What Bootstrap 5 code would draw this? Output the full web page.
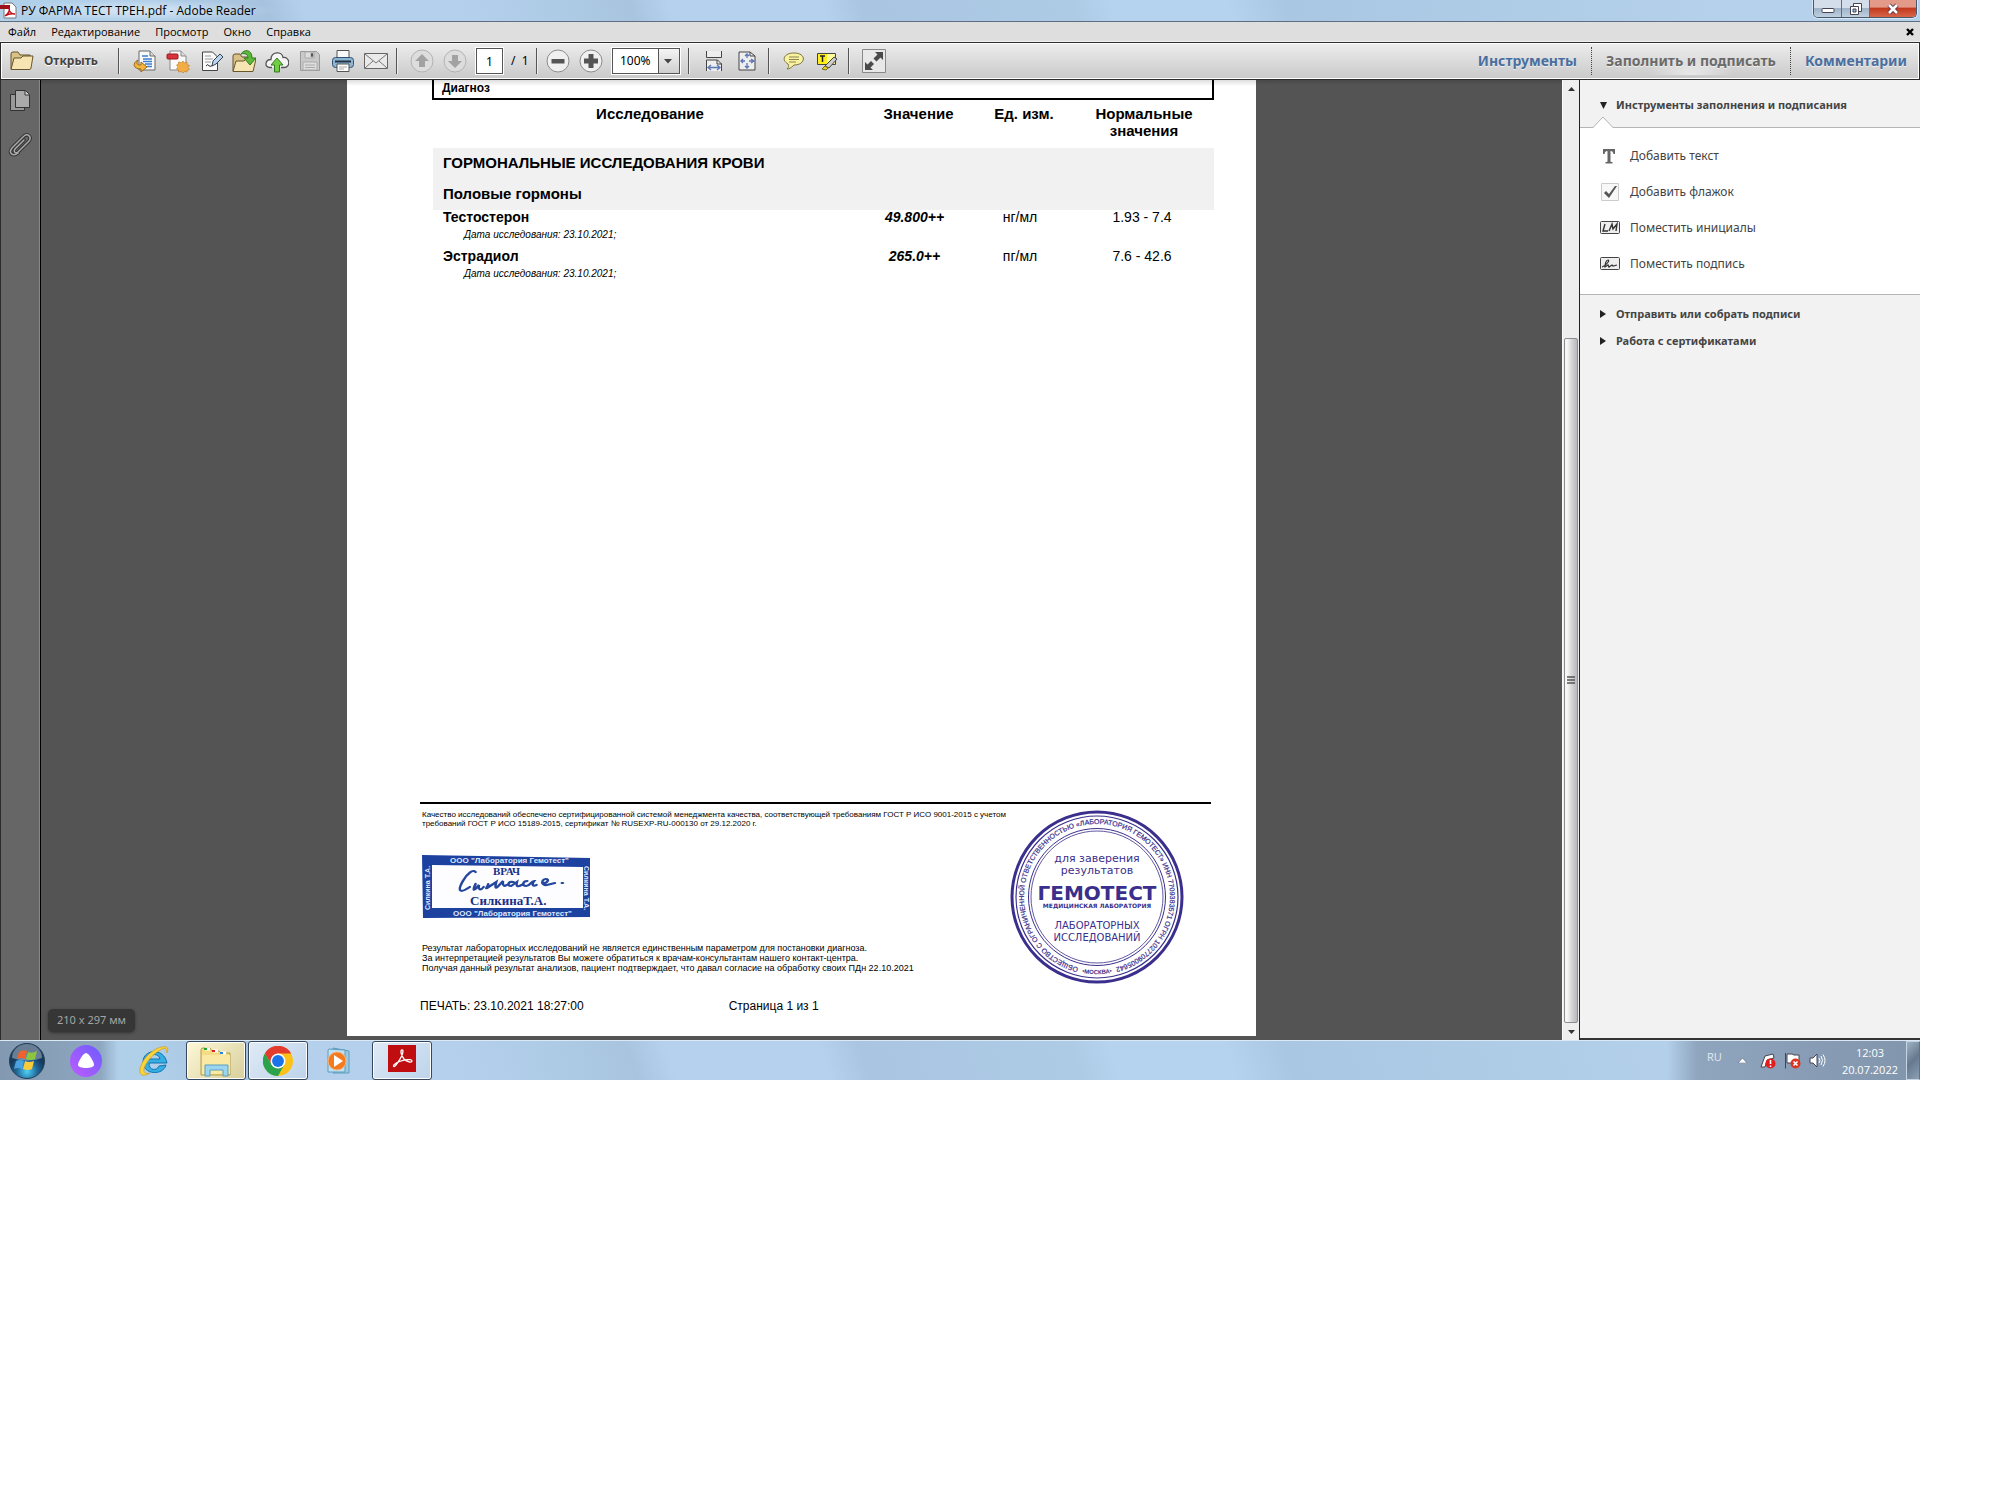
<!DOCTYPE html>
<html lang="ru">
<head>
<meta charset="utf-8">
<meta name="viewport" content="width=device-width, initial-scale=1">
<title>РУ ФАРМА ТЕСТ ТРЕН.pdf - Adobe Reader</title>
<link href="https://cdn.jsdelivr.net/npm/bootstrap@5.3.0/dist/css/bootstrap.min.css" rel="stylesheet">
<style>
body{background:#fff;font-family:"Noto Sans","Open Sans",sans-serif;font-size:12px;line-height:16px;color:#000}
button{border:0;background:none;padding:0;color:inherit;font:inherit}
svg{display:block;flex:none}
.desktop{max-width:1920px}
.glass{background-color:#b4d0eb;background-image:linear-gradient(72deg,#b0cfe9 0 8%,#a6c2de 14%,#b4d0ec 16% 24%,#adcae5 30%,#a8c4df 33%,#b5d1ee 35% 43%,#a9c5e1 45%,#aecbe6 56%,#b5d2ee 58% 64%,#a9c6e2 67%,#b0cde8 80%,#b5d1ec 90%)}
/* title bar */
.titlebar{height:22px;border-bottom:1px solid #5d6e80;font-family:"Open Sans",sans-serif}
.titleglow{background:radial-gradient(closest-side,rgba(255,255,255,.5),rgba(255,255,255,0));padding:1px 24px 0 0}
.winctl{height:18px;border:1px solid #48586a;border-top:0;border-radius:0 0 5px 5px;overflow:hidden;margin-right:3px;box-shadow:0 0 0 1px #d9e8f6}
.winctl button{width:28px;background:linear-gradient(#d3deea 45%,#a0b4c9 50%,#bfd0e0);border-right:1px solid #5d6e80;display:grid;place-items:center}
.winctl .shut{width:46px;border:0;background:linear-gradient(#e39a89 40%,#c23b1e 50%,#d8654b)}
.menubar{height:20px;background:#dedede;border-bottom:1px solid #f2f2f2;font-family:"Open Sans",sans-serif;font-size:11px}
.menubar a{color:#000;text-decoration:none}
.menulist{gap:15px}
/* toolbar */
.tools{height:38px;border:1px solid #2b2b2b;box-shadow:inset 0 0 0 1px #fff;background:linear-gradient(#ededed,#c9c9c9);color:#444}
.tools .slot{width:33px;height:30px;display:grid;place-items:center}
.vsep{width:2px;height:26px;border-left:1px solid #555;border-right:1px solid #eee;flex:none}
.openbtn{font-weight:700;width:109px;padding-left:9px;gap:10px;text-shadow:0 1px 0 #fff}
.openbtn span{font-size:12px}
.pagebox{width:27px;height:26px;border:1px solid #555;outline:1px solid #fff;text-align:center;background:#fff;padding:0;color:#000;font-size:12px}
.pagesum{width:25px}
.zoombox{height:26px;width:68px;border:1px solid #555;outline:1px solid #fff;background:linear-gradient(#f5f5f5,#cfcfcf)}
.zoombox select{appearance:none;border:0;border-radius:0;width:100%;height:24px;padding:0 0 0 7px;font-size:12px;color:#000;background:linear-gradient(#fff,#fff) left/45px 100% no-repeat,linear-gradient(#555,#555) 45px 0/1px 100% no-repeat}
.zoombox svg{position:absolute;right:7px;top:10px;pointer-events:none}
.modes a{font-size:14px;font-weight:700;line-height:28px;padding:0 14px;color:#4a6f9f;text-decoration:none;text-shadow:0 1px 0 #eee;border-left:1px dotted #444}
.modes a:first-child{border:0}
.modes a:last-child{padding-right:12px}
.modes a.current{color:#6a6a6a;background:radial-gradient(ellipse 42px 24px at 50% 100%,#e9e9e9,transparent)}
/* workspace */
.work{min-height:960px;background:#545454;border-left:1px solid #2b2b2b}
.rail{width:40px;background:#666;border-right:1px solid #000;box-shadow:inset -1px 0 #888;padding:9px 2px 0 0;gap:20px}
.viewer{background:linear-gradient(#484848,#545454 5px);padding-bottom:4px}
.sheet{width:909px;background:linear-gradient(#ddd,#fff 6px);font-family:"Liberation Sans",Arial,sans-serif;padding:0 42px 22px 72px}
.diag{border:2px solid #000;border-top:0;height:20px;margin-left:13px;font-size:12px;font-weight:700;padding:0 8px}
.results{margin-left:14px;width:781px;table-layout:fixed;line-height:17px;font-size:14px}
.results td,.results th{padding:0;text-align:center;vertical-align:top}
.results thead th{padding-top:5px;height:48px;font-size:15px}
.results thead th:last-child{padding-right:4px}
.results .grp th{background:#f1f1f1;text-align:left;padding:6px 0 6px 10px;font-size:15px;height:31px}
.results tbody .res>*{height:39px;line-height:14px;padding:0 8px 0 0}
.results tbody .res th{text-align:left;padding-left:10px}
.results .when{display:block;font-size:10px;font-weight:400;font-style:italic;line-height:12px;padding:5px 0 0 21px}
.foot{border-top:2px solid #000;margin:0 3px 0 1px}
.words{padding:6px 0 0 2px}
.fine{font-size:8px;line-height:9px}
.notes{font-size:9px;line-height:10px}
.printed{font-size:12px;gap:145px;padding:12px 1px 0}
.docmark{margin:24px 0 23px}
.seal{margin:4px 25px 0 0}
.tip{position:absolute;left:7px;bottom:8px;background:#363636;color:#a5a5a5;border-radius:5px;padding:3px 9px;height:23px;font-size:11px;box-shadow:0 1px 3px #333;white-space:nowrap}
.sbar{width:17px;background:#eee;border-left:1px solid #fafafa}
.sbar button{height:17px;display:grid;place-items:center}
.thumb{height:74%;border:1px solid #8c8c8c;border-radius:2px;margin:auto 1px 0;background:linear-gradient(90deg,#f6f6f6 20%,#d5d5d8 55%,#b8b9bd);display:grid;place-items:center}
.tray{width:341px;background:#f2f2f2;border-left:1px solid #222;border-bottom:2px solid #333;color:#444}
.tray h2{font-size:11px;line-height:16px;font-weight:700;margin:0}
.tray .head{height:48px;padding:17px 0 0 19px;border-bottom:1px solid #b5b5b5;position:relative}
.tray .notch{position:absolute;left:13px;bottom:-1px}
.tray .list{background:#fff;border-bottom:1px solid #b5b5b5;padding:10px 0 12px 20px}
.tray .list button{height:36px;gap:10px;width:100%;text-align:left}
.tray .sub{height:27px;padding-left:19px}
.subs{padding-top:5px}
/* taskbar */
.taskbar{height:40px;border-top:1px solid #dbe9f7}
.taskbar .dim{background:linear-gradient(90deg,#8399b1,#8ea6c0 85%,transparent)}
.taskgrp{gap:2px;padding-left:6px}
.assist{width:44px}
.task{width:60px;height:39px;display:grid;place-items:center}
.task.open{border:1px solid #35475a;border-radius:3px;box-shadow:inset 0 0 0 1px #fff;background:linear-gradient(135deg,#dfeaf6,#bdd3ea)}
.task.folder{background:linear-gradient(135deg,#fdf8d8,#d8cf9c)}
.status{background:linear-gradient(90deg,transparent,#8fa5be 12%,#8195ac);color:#fff;padding-left:40px;font-family:"Open Sans",sans-serif;font-size:11px}
.lang{color:#e3eaf1}
.clock{line-height:17px;padding-top:3px}
.peek{width:14px;border:1px solid #c5d4e3;border-right-color:#5f7387;background:linear-gradient(135deg,#a0b2c5,#66798e 50%,#8ba0b5)}
</style>
</head>
<body>
<div class="desktop d-flex flex-column">
  <header class="titlebar glass d-flex align-items-start">
    <div class="titleglow d-flex align-items-center gap-1">
      <svg width="17" height="20" viewBox="0 0 17 20"><path d="M4 2h8l4 4v11H4z" fill="#fff" stroke="#777"/><path d="M0 4h10v4H0z" fill="#a01018"/><path d="M5 15c4-3 5-6 4-8 0 3 2 6 6 6-4-1-7 0-10 2z" fill="none" stroke="#c0101c" stroke-width="1.5"/></svg>
      <span>РУ ФАРМА ТЕСТ ТРЕН.pdf - Adobe Reader</span>
    </div>
    <div class="winctl d-flex ms-auto">
      <button aria-label="Свернуть"><svg width="14" height="14"><rect x="1" y="6.500" width="12" height="4" rx="1" fill="#fff" stroke="#445"/></svg></button>
      <button aria-label="Восстановить"><svg width="14" height="14"><path d="M4.500 1.500h8v8h-8z" fill="#fff" stroke="#445"/><path d="M1.500 4.500h8v8h-8z" fill="#fff" stroke="#445"/><path d="M4 7h3v3H4z" fill="#9bd" stroke="#445"/></svg></button>
      <button class="shut" aria-label="Закрыть"><svg width="14" height="12"><path d="M3 2l8 8M11 2l-8 8" stroke="#534" stroke-width="4.500"/><path d="M3 2l8 8M11 2l-8 8" stroke="#fff" stroke-width="2.600"/></svg></button>
    </div>
  </header>
  <nav class="menubar d-flex align-items-center ps-2 pe-1">
    <div class="menulist d-flex"><a href="#">Файл</a><a href="#">Редактирование</a><a href="#">Просмотр</a><a href="#">Окно</a><a href="#">Справка</a></div>
    <button class="ms-auto" aria-label="Закрыть документ"><svg width="10" height="8"><path d="M1 1l6 6M7 1L1 7" stroke="#000" stroke-width="2.400"/></svg></button>
  </nav>

  <div class="tools d-flex align-items-center">
    <button class="openbtn d-flex align-items-center"><svg width="24" height="20" viewBox="0 0 24 20"><path d="M1 18V3q0-2 2-2h5l2 3h10v4" fill="#d9c188" stroke="#67552c"/><path d="M1 18.500L4 7h7l2-2h10l-2 12q0 1.500-2 1.500z" fill="#f6e5b2" stroke="#67552c"/></svg><span>Открыть</span></button>
    <span class="vsep ms-2 me-2"></span>
    <button class="slot" aria-label="Преобразовать"><svg width="24" height="24"><path d="M6 2h11l5 5v14H6z" fill="#fafafa" stroke="#666"/><path d="M17 2v5h5" fill="#ddd" stroke="#666"/><path d="M9 7h6M10 10h9M10 12.500h9M12 15h7M14 17.500h5" stroke="#3d7fd0" stroke-width="1.300"/><path d="M5 11c-6 3-5 9 3 9v3l6-5-6-5v3c-4 0-5-1-3-5z" fill="#f4b63c" stroke="#9a6718"/></svg></button>
    <button class="slot" aria-label="Создать PDF"><svg width="24" height="24"><path d="M4 2h11l5 5v14H4z" fill="#fafafa" stroke="#888"/><path d="M15 2v5h5" fill="#ddd" stroke="#888"/><rect x="1" y="5" width="11" height="5" rx="1" fill="#d8343c" stroke="#a0151d"/><path d="M17 12l1.500 2 2.500-1v2.500l2.500 1-1.500 2 1.500 2-2.500 1V23l-2.500-.500L17 24l-1.500-1.500-3 .500v-2l-2-1 1.500-2-1.500-2 2-1v-2l3 .500z" fill="#f2ae45" stroke="#b9792a" stroke-width=".6"/></svg></button>
    <button class="slot" aria-label="Редактировать"><svg width="24" height="24"><path d="M3.500 3h10l5 5v13.500h-15z" fill="#fafafa" stroke="#444"/><path d="M6 7h6M6 10h8M6 13h6" stroke="#999"/><path d="M7 17q2-3 3 0 2 1 4-1" fill="none" stroke="#333"/><path d="M13 17l1-5 7-7 3 3-7 7z" fill="#b9d4ec" stroke="#345"/></svg></button>
    <button class="slot" aria-label="Открыть из папки"><svg width="24" height="24"><path d="M1 22V7q0-2 2-2h5l2 3h9v5" fill="#d9c188" stroke="#67552c"/><path d="M1 22.500L4 12h8l2-2h10l-3 12.500z" fill="#f6e5b2" stroke="#67552c"/><path d="M9 5c3-5 11-5 11 4h4l-6 7-6-7h4c0-4-3-5-7-4z" fill="#5db83a" stroke="#2c7d18"/></svg></button>
    <button class="slot" aria-label="В облако"><svg width="24" height="24"><path d="M7 18.500H5c-6 0-5-8 1-8 0-8 11-9 12-2 7-1 8 10 1 10h-3" fill="#f5f5f5" stroke="#555" stroke-width="1.300"/><path d="M12 9l6 7h-3.500v7h-5v-7H6z" fill="#75cc45" stroke="#2f7d1c"/></svg></button>
    <button class="slot" aria-label="Сохранить"><svg width="22" height="22"><path d="M1.500 1.500h16l3 3v16h-19z" fill="#c9c9c9" stroke="#999"/><path d="M6 2h9v6H6zM4 12h14v8H4z" fill="#dedede" stroke="#aaa"/><path d="M12 3h2v4h-2zM6 15h10M6 17.500h10" stroke="#aaa"/></svg></button>
    <button class="slot" aria-label="Печать"><svg width="24" height="24"><path d="M6 1.500h12V10H6z" fill="#fafafa" stroke="#555"/><rect x="1.500" y="8.500" width="21" height="10" rx="3" fill="#8db4d3" stroke="#34536e"/><path d="M4 12.500h16" stroke="#234" stroke-width="2"/><path d="M6 15h12v7.500H6z" fill="#fff" stroke="#555"/><path d="M8 18h8M8 20h5" stroke="#aaa"/></svg></button>
    <button class="slot" aria-label="Почта"><svg width="26" height="20"><path d="M1.500 2.500h23v15h-23z" fill="#eaeaea" stroke="#666"/><path d="M2 3l11 9L24 3M2 17l8-7M24 17l-8-7" fill="none" stroke="#777"/></svg></button>
    <span class="vsep mx-1"></span>
    <button class="slot ms-1" aria-label="Предыдущая страница"><svg width="26" height="24"><circle cx="12" cy="12" r="11" fill="#ddd" stroke="#b3b3b3"/><path d="M12 5l7 7h-4v6H9v-6H5z" fill="#a2a2a2"/></svg></button>
    <button class="slot" aria-label="Следующая страница"><svg width="26" height="24"><circle cx="12" cy="12" r="11" fill="#ddd" stroke="#b3b3b3"/><path d="M12 19l7-7h-4V6H9v6H5z" fill="#a2a2a2"/></svg></button>
    <input class="pagebox ms-1" value="1" aria-label="Номер страницы"><span class="pagesum text-black ms-2">/ &nbsp;1</span>
    <span class="vsep me-1"></span>
    <button class="slot" aria-label="Уменьшить"><svg width="26" height="24"><circle cx="12" cy="12" r="11" fill="#f0f0f0" stroke="#8b8b8b"/><path d="M5.500 10h13v4.500h-13z" fill="#555"/></svg></button>
    <button class="slot" aria-label="Увеличить"><svg width="26" height="24"><circle cx="12" cy="12" r="11" fill="#f0f0f0" stroke="#8b8b8b"/><path d="M5 9.500h4.500V5h5v4.500H19v5h-4.500V19h-5v-4.500H5z" fill="#555"/></svg></button>
    <div class="zoombox position-relative ms-1"><select aria-label="Масштаб"><option>100%</option></select><svg width="8" height="5"><path d="M0 0h8L4 4.500z" fill="#444"/></svg></div>
    <span class="vsep ms-2 me-2"></span>
    <button class="slot" aria-label="По ширине"><svg width="22" height="22"><path d="M2.500 1v6.500h15V1M2.500 21v-11h11l4 4v7" fill="#eee" stroke="#444"/><path d="M13 10v4h5" fill="none" stroke="#444"/><path d="M4 17.500h12M7 15l-3 2.500L7 20M13 15l3 2.500-3 2.500" fill="none" stroke="#5b77b5" stroke-width="1.300"/></svg></button>
    <button class="slot me-1" aria-label="Страница целиком"><svg width="22" height="22"><path d="M2 2h11l5 4v14H2z" fill="#eee" stroke="#444"/><path d="M13 2v4h5" fill="none" stroke="#444"/><path d="M10 4v4M10 13v5M4 11h4M12 11h5M8 6l2-2 2 2M8 16l2 2 2-2M6 9l-2 2 2 2M14 9l3 2-3 2" fill="none" stroke="#5b77b5" stroke-width="1.300"/></svg></button>
    <span class="vsep me-1"></span>
    <button class="slot ms-1" aria-label="Комментарий"><svg width="24" height="20"><path d="M11 2c13 0 12 12 0 12-3 3-5 4-7 4 2-2 2-3 1-5C-2 9 1 2 11 2z" fill="#f9f3a0" stroke="#7c7345"/><path d="M6 6h10M6 8.500h10M6 11h7" stroke="#8b8457"/></svg></button>
    <button class="slot" aria-label="Выделить текст"><svg width="24" height="20"><path d="M1.500 2.500h18v11h-18z" fill="#fdfd9a" stroke="#444"/><path d="M2 3h9v10H2z" fill="#ffee1c"/><path d="M4 5h5M6.500 5v6" stroke="#222" stroke-width="1.500"/><path d="M9 15l9-9 3 2-8 9z" fill="#ccc" stroke="#444"/><path d="M6 18l3-3 3 2-2 2z" fill="#e6cf30" stroke="#776a10"/></svg></button>
    <span class="vsep mx-1"></span>
    <button class="slot ms-1" aria-label="Во весь экран"><svg width="26" height="24"><path d="M.5.500h23v23H.5z" fill="#e8e8e8" stroke="#888"/><path d="M13 3h8v8l-2.500-2.500-4 4-3-3 4-4zM11 21H3v-8l2.500 2.500 3.500-3.500 3 3-3.500 3.500z" fill="#4a4a4a"/></svg></button>
    <nav class="modes d-flex ms-auto"><a href="#">Инструменты</a><a href="#" class="current">Заполнить и подписать</a><a href="#">Комментарии</a></nav>
  </div>

  <main class="work d-flex">
    <div class="rail d-flex flex-column align-items-center flex-shrink-0">
      <button aria-label="Миниатюры"><svg width="24" height="24"><path d="M2.500 5.500h14v16h-14z" fill="#999" stroke="#333"/><path d="M7.500 1.500h10l4 4v13h-14z" fill="#aaa" stroke="#333"/><path d="M17 2v4h4" fill="#ddd" stroke="#333"/></svg></button>
      <button aria-label="Вложения"><svg width="24" height="24" fill="none" stroke-linecap="round"><path d="M16 7l-9 9c-2 3 1 5 3 3L21 8c3-4-1-8-5-5L4 15c-4 5 1 9 6 5" stroke="#333" stroke-width="3.500"/><path d="M16 7l-9 9c-2 3 1 5 3 3L21 8c3-4-1-8-5-5L4 15c-4 5 1 9 6 5" stroke="#aaa" stroke-width="1.500"/></svg></button>
    </div>
    <div class="viewer flex-grow-1 d-flex justify-content-center position-relative">
      <article class="sheet d-flex flex-column">
        <div class="diag">Диагноз</div>
        <table class="results">
          <colgroup><col style="width:434px"><col style="width:103px"><col style="width:108px"><col></colgroup>
          <thead><tr><th>Исследование</th><th>Значение</th><th>Ед. изм.</th><th>Нормальные<br>значения</th></tr></thead>
          <tbody>
            <tr class="grp"><th colspan="4">ГОРМОНАЛЬНЫЕ ИССЛЕДОВАНИЯ КРОВИ</th></tr>
            <tr class="grp"><th colspan="4">Половые гормоны</th></tr>
            <tr class="res"><th>Тестостерон<span class="when">Дата исследования: 23.10.2021;</span></th><td class="fw-bold fst-italic">49.800++</td><td>нг/мл</td><td>1.93 - 7.4</td></tr>
            <tr class="res"><th>Эстрадиол<span class="when">Дата исследования: 23.10.2021;</span></th><td class="fw-bold fst-italic">265.0++</td><td>пг/мл</td><td>7.6 - 42.6</td></tr>
          </tbody>
        </table>
        <footer class="mt-auto">
          <div class="foot d-flex justify-content-between">
            <div class="words">
              <p class="fine mb-0">Качество исследований обеспечено сертифицированной системой менеджмента качества, соответствующей требованиям ГОСТ Р ИСО 9001-2015 с учетом<br>требований ГОСТ Р ИСО 15189-2015, сертификат № RUSEXP-RU-000130 от 29.12.2020 г.</p>
              <svg class="docmark" width="172" height="68" viewBox="0 0 172 68" font-family="Liberation Serif, serif" font-weight="700">
                <path d="M0 3l168 3v59L1 66z" fill="#1c419f"/><path d="M10 13l151 2v41L10 56z" fill="#fdfdff"/>
                <g fill="#dfe8ff" font-family="Liberation Sans, sans-serif" font-size="8"><text x="28" y="11">ООО "Лаборатория Гемотест"</text><text x="31" y="64">ООО "Лаборатория Гемотест"</text><text transform="translate(8 58) rotate(-90)" font-size="7">Силкина Т.А.</text><text transform="translate(162 14) rotate(90)" font-size="7">Силкина Т.А.</text></g>
                <g fill="#1c2f86"><text x="71" y="23" font-size="11">ВРАЧ</text><text x="48" y="53" font-size="13">СилкинаТ.А.</text></g>
                <path transform="translate(-12 0) scale(1.15 1)" d="M57 20c-2-3-7 1-11 9-5 10-3 13 6 6m5-3c-3 7-2 8 3 1-1 6 2 5 4 2m4-3c0 2-3 5-1 4l8-6c-1 4-1 7 1 5l5-6c-1 4 1 6 3 4m6-3c-5-1-6 4-2 4l5-4c-1 5 1 5 4 3m5-4c-4 0-5 5-1 5s4-5 7-5c-2 3-2 6 2 4m5-2c4 1 7-4 3-4s-4 7 1 6l7-2m6 0h1" fill="none" stroke="#24479d" stroke-width="2.200" stroke-linecap="round"/>
              </svg>
              <p class="notes mb-0">Результат лабораторных исследований не является единственным параметром для постановки диагноза.<br>За интерпретацией результатов Вы можете обратиться к врачам-консультантам нашего контакт-центра.<br>Получая данный результат анализов, пациент подтверждает, что давал согласие на обработку своих ПДн 22.10.2021</p>
            </div>
            <svg class="seal" width="178" height="178" viewBox="-89 -89 178 178" fill="none" stroke="#3a2f8c">
              <circle r="85" stroke-width="3"/><circle r="81" stroke-width="1.200"/><circle r="68.500"/><circle r="66" stroke-width=".8"/>
              <path id="ring" d="M-17 71A73 73 0 1 1 17 71" stroke="none"/><path id="low" d="M-40 66A77 77 0 0 0 40 66" stroke="none"/>
              <g fill="#3a2f8c" stroke="none" text-anchor="middle" font-family="DejaVu Sans, sans-serif">
                <text font-family="Liberation Sans, sans-serif" font-size="7" stroke="#3a2f8c" stroke-width=".2"><textPath href="#ring" startOffset="50%">ОБЩЕСТВО С ОГРАНИЧЕННОЙ ОТВЕТСТВЕННОСТЬЮ «ЛАБОРАТОРИЯ ГЕМОТЕСТ» ИНН 7709383571 ОГРН 1027709005642</textPath></text>
                <text font-family="Liberation Sans, sans-serif" font-size="6" font-weight="700"><textPath href="#low" startOffset="50%">•МОСКВА•</textPath></text>
                <text y="-35" font-size="11">для заверения</text><text y="-23" font-size="11">результатов</text>
                <text y="3" font-weight="700" font-size="20">ГЕМОТЕСТ</text><text y="11" font-size="6" font-weight="700">МЕДИЦИНСКАЯ ЛАБОРАТОРИЯ</text>
                <text y="32" font-size="10">ЛАБОРАТОРНЫХ</text><text y="44" font-size="10">ИССЛЕДОВАНИЙ</text>
              </g>
            </svg>
          </div>
          <div class="printed d-flex"><span>ПЕЧАТЬ: 23.10.2021 18:27:00</span><span>Страница 1 из 1</span></div>
        </footer>
      </article>
      <div class="tip">210 x 297 мм</div>
    </div>
    <div class="sbar d-flex flex-column flex-shrink-0">
      <button aria-label="Вверх"><svg width="7" height="4"><path d="M0 4h7L3.500 0z" fill="#333"/></svg></button>
      <div class="flex-grow-1 d-flex flex-column"><div class="thumb"><svg width="8" height="9"><path d="M0 1h8M0 4h8M0 7h8" stroke="#555" stroke-width="1.500"/></svg></div></div>
      <button aria-label="Вниз"><svg width="7" height="4"><path d="M0 0h7L3.500 4z" fill="#333"/></svg></button>
    </div>
    <aside class="tray flex-shrink-0">
      <div class="head d-flex gap-2 align-items-start"><svg class="mt-1" width="9" height="8"><path d="M1 1h7L4.500 8z" fill="#222"/></svg><h2>Инструменты заполнения и подписания</h2>
        <svg class="notch" width="20" height="12"><path d="M0 12L10 1l10 11z" fill="#fff"/><path d="M0 11.500L10 1l10 10.500" fill="none" stroke="#b5b5b5"/></svg></div>
      <div class="list">
        <button class="d-flex align-items-center"><svg width="20" height="18"><path d="M3 2h12v5h-1.500c-.5-2-1-3-3-3v10c0 1 .5 1 2 1v1.500h-7V15c1.500 0 2 0 2-1V4c-2 0-2.500 1-3 3H3z" fill="#666"/></svg>Добавить текст</button>
        <button class="d-flex align-items-center"><svg width="20" height="20"><path d="M1.500 1.500h17v17h-17z" fill="#f8f8f8" stroke="#ccc"/><path d="M4 11l2-2 3 3 6-8h2L9 16z" fill="#555"/></svg>Добавить флажок</button>
        <button class="d-flex align-items-center"><svg width="20" height="14"><rect x=".5" y=".5" width="19" height="12" rx="1" fill="#eee" stroke="#444"/><path d="M5 3L3 10h5M9 10l3-7 1 5 4-5-1 7" fill="none" stroke="#333" stroke-width="1.400"/></svg>Поместить инициалы</button>
        <button class="d-flex align-items-center"><svg width="20" height="14"><rect x=".5" y=".5" width="19" height="12" rx="1" fill="#eee" stroke="#444"/><path d="M2 10c5-2 8-7 6-7S5 7 5 10l3-2 1 2 3-2 1 1 4-1" fill="none" stroke="#333" stroke-width="1.200"/></svg>Поместить подпись</button>
      </div>
      <div class="subs">
        <div class="sub d-flex align-items-center gap-2"><svg width="9" height="8"><path d="M1 0v8l6-4z" fill="#222"/></svg><h2>Отправить или собрать подписи</h2></div>
        <div class="sub d-flex align-items-center gap-2"><svg width="9" height="8"><path d="M1 0v8l6-4z" fill="#222"/></svg><h2>Работа с сертификатами</h2></div>
      </div>
    </aside>
  </main>

  <footer class="taskbar glass d-flex">
    <div class="dim d-flex ps-2 pe-1">
      <button class="me-3" aria-label="Пуск"><svg width="38" height="38" viewBox="0 0 38 38"><defs><radialGradient id="orb" cy=".8"><stop stop-color="#4fd0f5"/><stop offset=".6" stop-color="#1f6697"/><stop offset="1" stop-color="#173a5c"/></radialGradient></defs><circle cx="19" cy="19" r="17.500" fill="url(#orb)" stroke="#243f58"/><path d="M4 16a15 14 0 0 1 30 0q-15 5-30 0z" fill="#fff" opacity=".35"/><path d="M11 10q4-3 8-1l-2 8q-4-2-8 0z" fill="#f0622c"/><path d="M20 10q4 2 9-1l-2 8q-5 2-9 0z" fill="#8cc63e"/><path d="M8 19q4-2 8 0l-2 8q-4-2-8 0z" fill="#4aa3e0"/><path d="M17 19q4 2 9 0l-2 8q-4 2-9 0z" fill="#fccb3a"/></svg></button>
      <button class="assist ms-2" aria-label="Алиса"><svg width="34" height="38"><defs><linearGradient id="al" x1="1" y1="0" x2="0" y2="1"><stop stop-color="#6a5cff"/><stop offset="1" stop-color="#c05cff"/></linearGradient></defs><circle cx="16" cy="19" r="16" fill="url(#al)"/><path d="M16 11c3 0 8 9 8 12 0 4-16 4-16 0 0-3 5-12 8-12z" fill="#fff"/></svg></button>
    </div>
    <div class="taskgrp d-flex">
    <button class="task" aria-label="Internet Explorer"><svg width="32" height="34" viewBox="0 0 32 34"><path d="M28 21c-3 11-23 10-23-3S26 3 29 19H11c0 8 8 8 10 3zM11 15h11c-1-6-10-6-11 0z" fill="#35aee4" stroke="#1472b0"/><path d="M29 9C32 2 26 1 18 5 5 12-2 28 4 31c3 1 6-1 8-2-6 2-8-2-4-9C13 11 26 2 28 5z" fill="#fbd33c" stroke="#c79313" stroke-width=".6"/></svg></button>
    <button class="task open folder" aria-label="Проводник"><svg width="32" height="32" viewBox="0 0 32 32"><path d="M1 5q0-2 2-2h7l2 3h7l2 2h9v22H1z" fill="#f3dc82" stroke="#b39b4b"/><path d="M5 4h5M13 6h5M21 8h5" stroke="#fff" stroke-width="3"/><path d="M4 4h3" stroke="#1ca52c" stroke-width="2"/><path d="M12 6h3" stroke="#d22" stroke-width="2"/><path d="M20 8h3" stroke="#28d" stroke-width="2"/><path d="M2 10h28v19H2z" fill="#f9e9a4"/><path d="M5 31V20h23v11h-5v-6H10v6z" fill="#9bd5ee" stroke="#5a9ec2"/></svg></button>
    <button class="task open" aria-label="Chrome"><svg width="30" height="30" viewBox="0 0 48 48"><circle cx="24" cy="24" r="24" fill="#fbc116"/><path d="M3 12a24 24 0 0 1 42 0H24L14 30z" fill="#e33b2e"/><path d="M3 12a24 24 0 0 0 21 36l10-18H14z" fill="#2ba24c"/><circle cx="24" cy="24" r="12" fill="#fff"/><circle cx="24" cy="24" r="9.500" fill="#1a73e8"/></svg></button>
    <button class="task" aria-label="Media Player"><svg width="26" height="28" viewBox="2 0 26 28"><path d="M8 1l16 3v22H8z" fill="#9cc9e2" stroke="#5d9cc0"/><path d="M4 2l16 1v22H3V3z" fill="#bfe0f1" stroke="#5d9cc0"/><circle cx="12" cy="14" r="9" fill="#f47a1f" stroke="#f9b27a"/><path d="M9 8v12l9-6z" fill="#fff"/></svg></button>
    <button class="task open" aria-label="Adobe Reader"><svg class="mb-1" width="28" height="27"><path d="M0 0h28v27H0z" fill="#c00d10"/><path d="M14 5c-2 0-1 5 2 9 3 3 8 4 8 2 0-3-12-1-17 3-3 2-1 4 1 1 3-4 7-11 7-14 0-1-1-1-1-1z" fill="none" stroke="#fff" stroke-width="1.300"/></svg></button>
    </div>
    <div class="status ms-auto d-flex">
      <span class="lang pt-2 me-3">RU</span>
      <button class="me-2" aria-label="Скрытые значки"><svg width="9" height="5"><path d="M0 5h9L4.500 0z" fill="#fff" stroke="#456" stroke-width=".5"/></svg></button>
      <span class="d-flex align-items-center gap-2 ps-1">
        <svg width="17" height="17"><path d="M2 15L6 4l8-2 1 4-7 2-2 7z" fill="#fff" stroke="#445"/><circle cx="11.500" cy="11.500" r="5" fill="#e11d1d"/><path d="M11.500 8v4M11.500 13.500v1.500" stroke="#fff" stroke-width="1.600"/></svg>
        <svg width="17" height="17"><path d="M1.500 1v15.500M3 2h5l2 1h5v8H3z" fill="#fff" stroke="#445"/><circle cx="11.500" cy="11.500" r="5" fill="#d32"/><path d="M9.500 9.500l4 4m0-4l-4 4" stroke="#fff" stroke-width="1.600"/></svg>
        <svg width="17" height="17"><path d="M1 6h3l4-4v13l-4-4H1z" fill="#fff" stroke="#445"/><path d="M10 6q2 3 0 5M12 4q3 4 0 9M14 2.500q4 6 0 12" fill="none" stroke="#fff"/></svg>
      </span>
      <div class="clock text-center ms-3 me-2">12:03<br>20.07.2022</div>
      <button class="peek" aria-label="Показать рабочий стол"></button>
    </div>
  </footer>
</div>
<script src="https://cdn.jsdelivr.net/npm/bootstrap@5.3.0/dist/js/bootstrap.bundle.min.js"></script>
</body>
</html>
